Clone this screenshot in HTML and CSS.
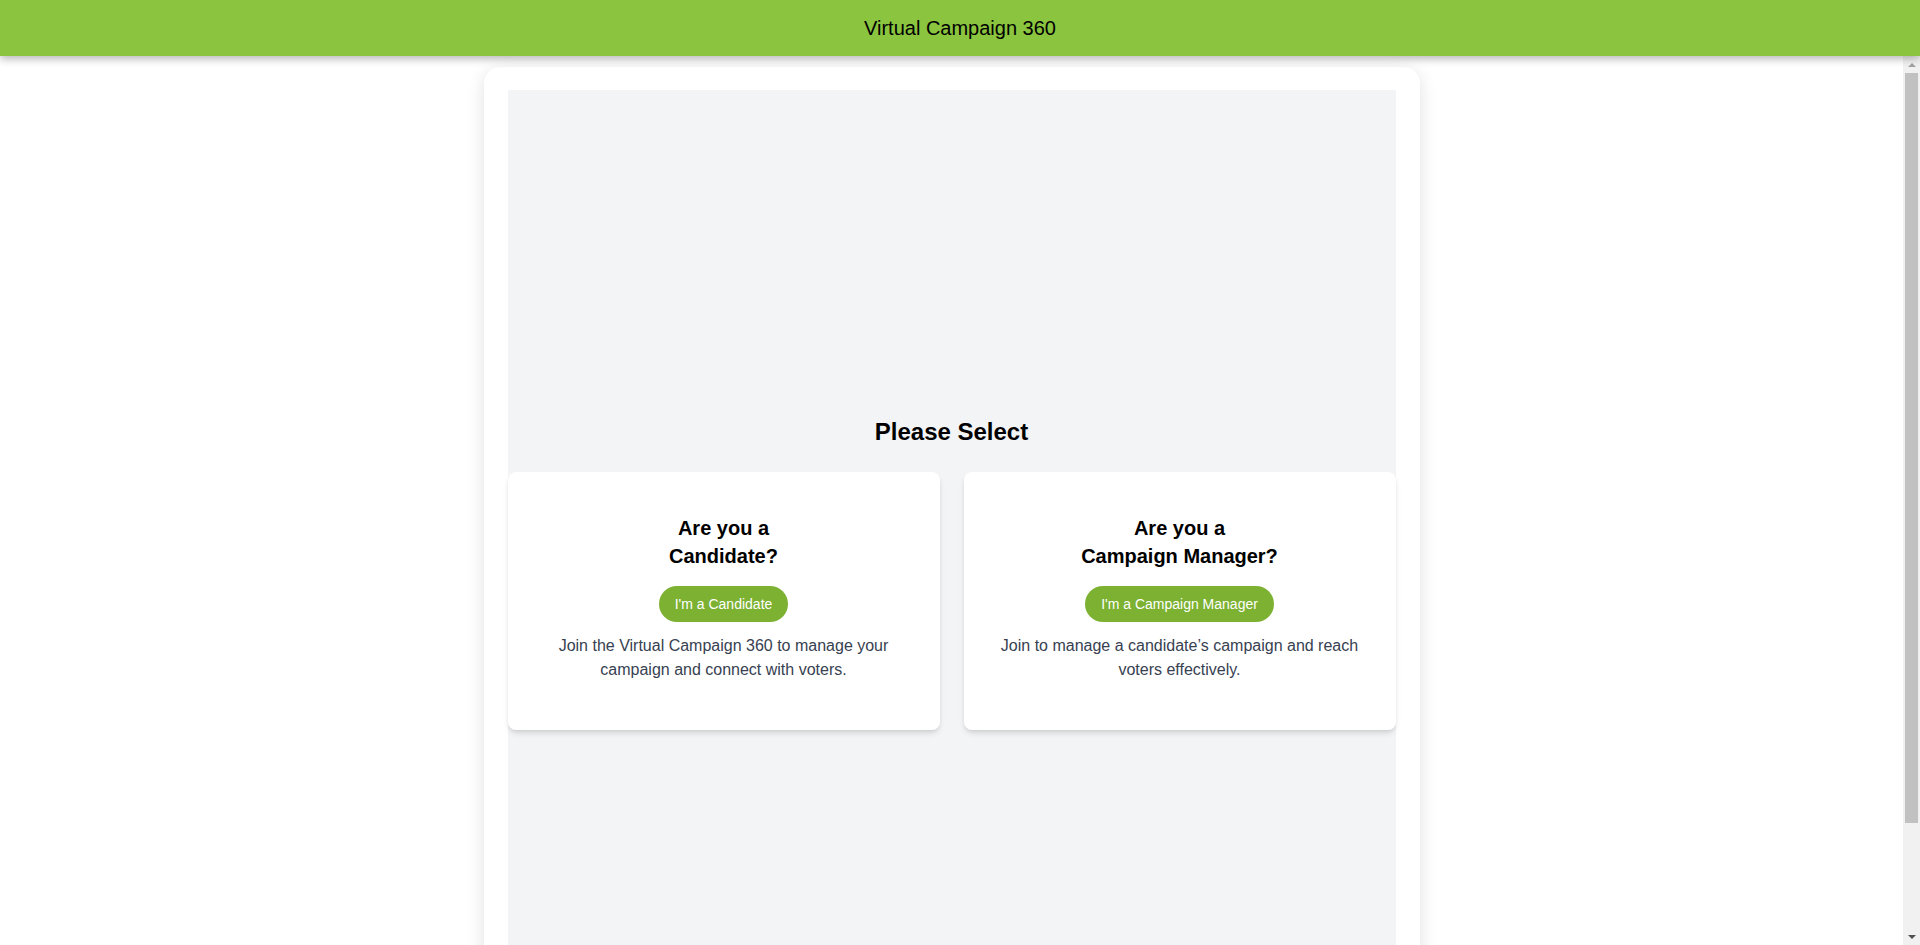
FILE: index.html
```html
<!DOCTYPE html>
<html lang="en">
<head>
<meta charset="utf-8">
<title>Virtual Campaign 360</title>
<link rel="stylesheet" href="styles.css">
</head>
<body>
<header class="topbar">
  <h1 class="topbar-title">Virtual Campaign 360</h1>
</header>
<div class="viewport">
  <main class="scroller">
    <div class="panel">
      <section class="select-area">
        <h2 class="select-title">Please Select</h2>
        <div class="options">
          <div class="option">
            <h3 class="option-title">Are you a<br>Candidate?</h3>
            <button class="option-btn" type="button">I'm a Candidate</button>
            <p class="option-text">Join the Virtual Campaign 360 to manage your campaign and connect with voters.</p>
          </div>
          <div class="option">
            <h3 class="option-title">Are you a<br>Campaign Manager?</h3>
            <button class="option-btn" type="button">I'm a Campaign Manager</button>
            <p class="option-text">Join to manage a candidate’s campaign and reach voters effectively.</p>
          </div>
        </div>
      </section>
    </div>
  </main>
  <div class="rail" aria-hidden="true">
    <div class="rail-btn"><span class="arrow-up"></span></div>
    <div class="rail-track"><div class="rail-thumb"></div></div>
    <div class="rail-btn"><span class="arrow-down"></span></div>
  </div>
</div>
</body>
</html>
```

FILE: styles.css
```css
* { box-sizing: border-box; }
html, body {
  margin: 0;
  height: 100%;
  overflow: hidden;
}
body {
  font-family: "Liberation Sans", Arial, sans-serif;
  background: #ffffff;
  color: #000;
  display: flex;
  flex-direction: column;
}
.topbar {
  position: relative;
  z-index: 2;
  flex: 0 0 56px;
  height: 56px;
  background: #8bc53f;
  display: flex;
  align-items: center;
  justify-content: center;
  box-shadow: 0 3px 8px rgba(0, 0, 0, 0.28);
}
.topbar-title {
  margin: 0;
  font-size: 20px;
  font-weight: 400;
  line-height: 28px;
  color: #000;
}
.viewport {
  flex: 1 1 auto;
  min-height: 0;
  display: flex;
}
.scroller {
  flex: 1 1 auto;
  min-width: 0;
  overflow: hidden;
  background: #ffffff;
}
.rail {
  flex: 0 0 17px;
  width: 17px;
  background: #f1f1f1;
  display: flex;
  flex-direction: column;
}
.rail-btn {
  flex: 0 0 17px;
  height: 17px;
  display: flex;
  align-items: center;
  justify-content: center;
}
.arrow-up {
  width: 0;
  height: 0;
  border-left: 4px solid transparent;
  border-right: 4px solid transparent;
  border-bottom: 4px solid #a3a3a3;
}
.arrow-down {
  width: 0;
  height: 0;
  border-left: 4px solid transparent;
  border-right: 4px solid transparent;
  border-top: 4px solid #505050;
}
.rail-track {
  flex: 1 1 auto;
  padding: 0 2px;
}
.rail-thumb {
  height: 750px;
  background: #c1c1c1;
}
.panel {
  width: 936px;
  margin: 11px auto 0;
  padding: 23px 24px 24px;
  background: #ffffff;
  border-radius: 16px;
  box-shadow: 0 4px 18px rgba(0, 0, 0, 0.12);
}
.select-area {
  background: #f3f4f6;
  min-height: 958px;
  padding-top: 326px;
  display: flex;
  flex-direction: column;
}
.select-title {
  margin: 0 0 24px;
  font-size: 24px;
  line-height: 32px;
  font-weight: 700;
  text-align: center;
}
.options {
  display: grid;
  grid-template-columns: 1fr 1fr;
  gap: 24px;
}
.option {
  background: #ffffff;
  border-radius: 8px;
  box-shadow: 0 4px 6px -1px rgba(0, 0, 0, 0.12), 0 2px 4px -2px rgba(0, 0, 0, 0.1);
  padding: 42px 32px 48px;
  display: flex;
  flex-direction: column;
  align-items: center;
  text-align: center;
}
.option-title {
  margin: 0;
  font-size: 20px;
  line-height: 28px;
  font-weight: 700;
}
.option-btn {
  margin-top: 16px;
  height: 36px;
  padding: 0 16px;
  border: none;
  border-radius: 18px;
  background: #7cb132;
  color: #ffffff;
  font-family: "Liberation Sans", Arial, sans-serif;
  font-size: 14px;
  line-height: 20px;
  cursor: pointer;
}
.option-text {
  margin: 12px 0 0;
  font-size: 16px;
  line-height: 24px;
  color: #374151;
}
```
